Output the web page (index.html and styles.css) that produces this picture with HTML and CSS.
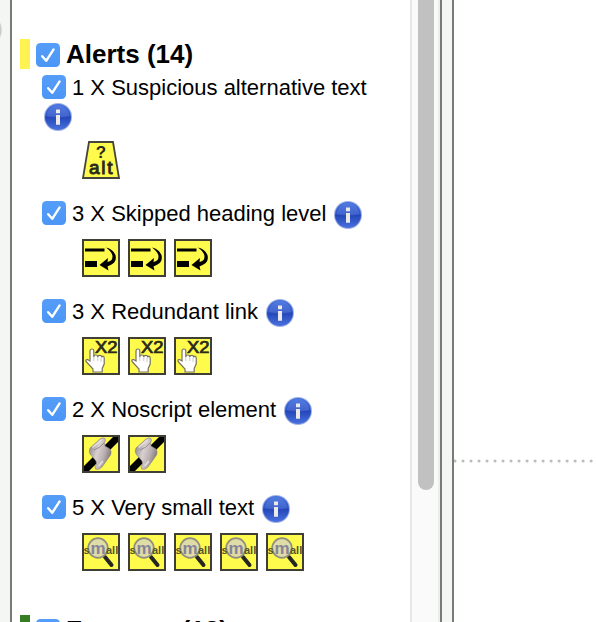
FILE: index.html
```html
<!DOCTYPE html>
<html lang="en">
<head>
<meta charset="utf-8">
<title>Alerts</title>
<link rel="stylesheet" href="styles.css">
</head>
<body>
<svg class="defs" width="0" height="0" aria-hidden="true">
  <defs>
    <linearGradient id="blue" x1="0" y1="0" x2="0" y2="1"><stop offset="0" stop-color="#4270e0"/><stop offset=".45" stop-color="#3157c9"/><stop offset=".52" stop-color="#2448b9"/><stop offset="1" stop-color="#4a70df"/></linearGradient>
    <linearGradient id="paper" x1="0" y1=".2" x2="1" y2=".6"><stop offset="0" stop-color="#8b8384"/><stop offset=".4" stop-color="#d9d0d1"/><stop offset=".7" stop-color="#b9afb0"/><stop offset="1" stop-color="#7b7374"/></linearGradient>
    <linearGradient id="check" x1="0" y1="0" x2="0" y2="1"><stop offset="0" stop-color="#559df8"/><stop offset="1" stop-color="#4b96f6"/></linearGradient>
  </defs>
  <symbol id="cb" viewBox="0 0 24 24"><rect width="24" height="24" rx="4.500" fill="url(#check)"/><path d="M6.200 13.200l4 4.600L17.600 6.400" fill="none" stroke="#fff" stroke-width="2.400" stroke-linecap="round" stroke-linejoin="round"/></symbol>
  <symbol id="info" viewBox="0 0 28 28"><circle cx="14" cy="14" r="14" fill="#9fb1e3"/><circle cx="14" cy="14" r="13" fill="url(#blue)"/><path d="M3 13a11 11 0 0 1 22 0Q14 16 3 13z" fill="#fff" opacity=".09"/><path d="M12 6.500h4v3.700h-4zM12 12h4v9.800h-4z" fill="#eceae8"/></symbol>
  <symbol id="alt" viewBox="0 0 38 38"><path d="M7 1h24l6 36H1z" fill="#fffb4c" stroke="#45453c" stroke-width="1.800"/></symbol>
  <symbol id="skip" viewBox="0 0 38 38"><rect x="1" y="1" width="36" height="36" class="tile"/><path d="M3 9.500h19.500v3H3zM3 22h12v6H3z"/><path d="M24 8.500Q31 10 33.500 16q1.500 7-4 9.500l-4 2 1 4-9-5.500 8.500-7-.5 4q5-1 5-5.500 0-4-6.500-9z"/></symbol>
  <symbol id="link" viewBox="0 0 38 38"><rect x="1" y="1" width="36" height="36" class="tile"/></symbol>
  <symbol id="hand" viewBox="0 0 38 38"><path d="M8 24V14q0-2 1.900-2t1.900 2v6q0-2 2-2t2 2q0-1.600 2-1.600t2 2q0-1.200 1.200-1.200t1.200 2V27l-2 4.500v3.500H11V32L4 24.500q-.5-2.500 2-1.800z" fill="#fff" stroke="#77715f" stroke-width="1.200"/><path d="M11.800 20v4M15.800 20v4M19 21v4" stroke="#b5b5b5" stroke-width=".7"/></symbol>
  <symbol id="script" viewBox="0 0 38 38"><rect x="1" y="1" width="36" height="36" class="tile"/><path d="M2 36v-5L31 2h5v5L7 36z"/><path d="M8 13L18 4q3-2 5-.500 1 2-.500 4L23 11l5 3q2 3 .500 6L20 32q-3 3.500-6.500 2-1.500-2 1-5l-.5-3-6-7q-1.500-3 0-6z" fill="url(#paper)" stroke="#857d7a" stroke-width=".6"/><path d="M11 12L19 5.500M17 30.500l3.500-4" fill="none" stroke="#e8e0e0" stroke-width="1.500" stroke-linecap="round"/><path d="M12 15q6-2 10-7" fill="none" stroke="#8d8485" stroke-width=".9"/></symbol>
  <symbol id="small" viewBox="0 0 38 38"><rect x="1" y="1" width="36" height="36" class="tile"/></symbol>
  <symbol id="lens" viewBox="0 0 38 38"><path d="M23 24l6.500 8" stroke="#252521" stroke-width="4" stroke-linecap="round"/><circle cx="16" cy="15" r="9.800" fill="#dfdca8" stroke="#918f7d" stroke-width="1.800"/></symbol>
</svg>
<main class="app">
  <div class="gutter left"></div>
  <section class="panel">
    <h2 class="heading alerts"><svg class="check"><use href="#cb"/></svg><span>Alerts (14)</span></h2>
    <ul class="list">
      <li><div class="label"><svg class="check"><use href="#cb"/></svg><span class="t1">1 X Suspicious alternative text</span><svg class="info wrapped"><use href="#info"/></svg></div>
        <div class="icons"><svg><use href="#alt"/><text x="19" y="17" class="glyph question">?</text><text x="7" y="33" class="glyph alt-word" textLength="23.500" lengthAdjust="spacing">alt</text></svg></div></li>
      <li><div class="label"><svg class="check"><use href="#cb"/></svg><span>3 X Skipped heading level</span><svg class="info"><use href="#info"/></svg></div>
        <div class="icons"><svg><use href="#skip"/></svg><svg><use href="#skip"/></svg><svg><use href="#skip"/></svg></div></li>
      <li><div class="label"><svg class="check"><use href="#cb"/></svg><span>3 X Redundant link</span><svg class="info"><use href="#info"/></svg></div>
        <div class="icons">
          <svg><use href="#link"/><text x="13" y="15.500" class="glyph times" textLength="22.500" lengthAdjust="spacingAndGlyphs">X2</text><use href="#hand"/></svg>
          <svg><use href="#link"/><text x="13" y="15.500" class="glyph times" textLength="22.500" lengthAdjust="spacingAndGlyphs">X2</text><use href="#hand"/></svg>
          <svg><use href="#link"/><text x="13" y="15.500" class="glyph times" textLength="22.500" lengthAdjust="spacingAndGlyphs">X2</text><use href="#hand"/></svg>
        </div></li>
      <li><div class="label"><svg class="check"><use href="#cb"/></svg><span>2 X Noscript element</span><svg class="info"><use href="#info"/></svg></div>
        <div class="icons"><svg><use href="#script"/></svg><svg><use href="#script"/></svg></div></li>
      <li><div class="label"><svg class="check"><use href="#cb"/></svg><span>5 X Very small text</span><svg class="info"><use href="#info"/></svg></div>
        <div class="icons">
          <svg><use href="#small"/><use href="#lens"/><text y="21" class="glyph tiny"><tspan x="1.500">s</tspan><tspan x="8.500" class="big">m</tspan><tspan x="24">all</tspan></text></svg>
          <svg><use href="#small"/><use href="#lens"/><text y="21" class="glyph tiny"><tspan x="1.500">s</tspan><tspan x="8.500" class="big">m</tspan><tspan x="24">all</tspan></text></svg>
          <svg><use href="#small"/><use href="#lens"/><text y="21" class="glyph tiny"><tspan x="1.500">s</tspan><tspan x="8.500" class="big">m</tspan><tspan x="24">all</tspan></text></svg>
          <svg><use href="#small"/><use href="#lens"/><text y="21" class="glyph tiny"><tspan x="1.500">s</tspan><tspan x="8.500" class="big">m</tspan><tspan x="24">all</tspan></text></svg>
          <svg><use href="#small"/><use href="#lens"/><text y="21" class="glyph tiny"><tspan x="1.500">s</tspan><tspan x="8.500" class="big">m</tspan><tspan x="24">all</tspan></text></svg>
        </div></li>
    </ul>
    <h2 class="heading features"><svg class="check"><use href="#cb"/></svg><span>Features (12)</span></h2>
  </section>
  <div class="track"><div class="thumb"></div></div>
  <div class="gutter right"></div>
  <section class="page"><svg class="dots" viewBox="0 0 142 4"><path d="M1 2H142"/></svg></section>
</main>
</body>
</html>
```
FILE: styles.css
```css
* { box-sizing: border-box; }
body { margin: 0; overflow: hidden; background: #fff; color: #000; font-family: "Liberation Sans", Arial, sans-serif; }
.defs { position: absolute; }
.app { display: flex; height: 622px; overflow: hidden; }
.gutter { flex: none; width: 12px; background: #f5f5f5; border-right: 2px solid #757c73; }
.left { background: radial-gradient(ellipse 2px 8px at 0 30px, #ccc 60%, #f5f5f5 100%); }
.right { width: 14px; border-left: 2px solid #757c73; }
.panel { flex: none; width: 398px; padding-top: 39px; }
.heading { display: flex; align-items: center; gap: 6px; height: 30px; margin: 0 0 0 8px; padding-left: 6px; border-left: 10px solid #fff352; font-size: 26px; line-height: 30px; font-weight: bold; white-space: nowrap; }
.alerts { margin-bottom: 6px; }
.heading .check { margin-top: 1px; }
.check { flex: none; width: 24px; height: 24px; }
.list { list-style: none; margin: 0; padding: 0 0 0 30px; }
.list li { margin-bottom: 22px; }
.label { display: flex; flex-wrap: wrap; align-items: flex-start; font-size: 22px; line-height: 25px; }
.label span { margin-left: 6px; white-space: nowrap; }
.info { flex: none; width: 28px; height: 28px; margin-left: 8px; }
.wrapped { margin: 3px 20px 0 2px; }
.label .t1 { margin-right: 20px; }
.icons { display: flex; gap: 8px; margin: 10px 0 0 40px; }
.icons svg { width: 38px; height: 38px; }
.features { margin-top: 44px; border-left-color: #377d22; }
.track { flex: none; width: 30px; padding-left: 6px; background: #fafafa; border-left: 2px solid #e7e7e7; border-right: 2px solid #ededed; }
.thumb { width: 16px; height: 490px; background: #c1c1c1; border-radius: 0 0 8px 8px; }
.page { flex: 1; padding-top: 459px; }
.dots { display: block; width: 142px; height: 4px; }
.dots path { stroke: #bcbcbc; stroke-width: 3; stroke-linecap: round; stroke-dasharray: .01 8; }
.tile { fill: #fffb4c; stroke: #3f3f35; stroke-width: 2; }
.glyph { font-family: "Liberation Sans", Arial, sans-serif; fill: #29291b; }
.question { font-size: 17px; font-weight: bold; text-anchor: middle; }
.alt-word { font-size: 19px; stroke: #29291b; stroke-width: .9px; }
.times { font-size: 16px; stroke: #29291b; stroke-width: .7px; }
.tiny { font-size: 11px; font-weight: bold; fill: #55532a; }
.big { font-size: 17px; fill: #858399; }
```
